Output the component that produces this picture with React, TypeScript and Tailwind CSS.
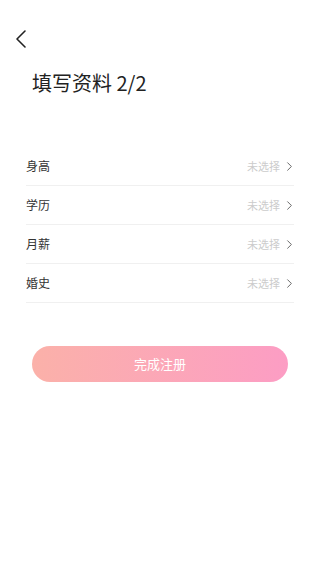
import { ChevronRight } from "lucide-react";

const ROWS = ["身高", "学历", "月薪", "婚史"];

export default function App() {
  return (
    <div
      className="flex min-h-[569px] w-[320px] flex-col bg-white"
      style={{ fontFamily: '"Noto Sans CJK SC", "Noto Sans", sans-serif' }}
    >
      <div className="flex h-[78px] items-center pl-[14px]">
        <svg width="14" height="20" viewBox="0 0 14 20">
          <path d="M11 2 L3 10 L11 18" fill="none" stroke="#222" strokeWidth="1.6" strokeLinecap="round" strokeLinejoin="round" />
        </svg>
      </div>
      <h1 className="-mt-[9px] pl-[32px] text-[20px] leading-[28px] text-[#222]">填写资料 2/2</h1>

      <div className="mt-[50px] px-[26px]">
        {ROWS.map((label) => (
          <div key={label} className="flex h-[39px] items-center justify-between border-b border-[#f0f0f0]">
            <span className="text-[12px] text-[#333]">{label}</span>
            <span className="-mr-[3px] flex items-center gap-[2px] text-[11px] text-[#cccccc]">
              未选择
              <ChevronRight className="h-[15px] w-[15px] text-[#555]" strokeWidth={1.4} />
            </span>
          </div>
        ))}
      </div>

      <button
        type="button"
        className="mx-[32px] mt-[43px] h-[36px] rounded-full bg-gradient-to-r from-[#fbb1a9] to-[#fc9dc4] text-[13px] text-white"
      >
        完成注册
      </button>
    </div>
  );
}
